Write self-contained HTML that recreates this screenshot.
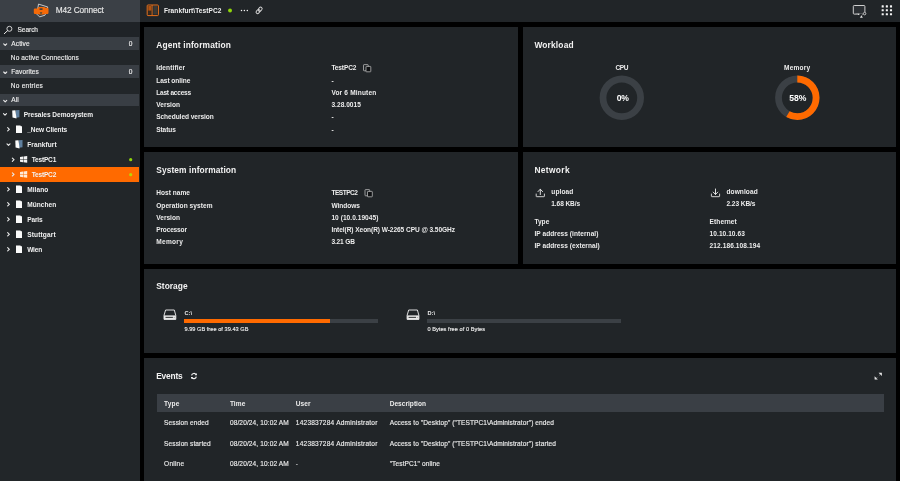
<!DOCTYPE html>
<html lang="en">
<head>
<meta charset="utf-8">
<title>M42 Connect</title>
<style>
html,body{margin:0;padding:0;background:#000;}
body{width:900px;height:481px;overflow:hidden;position:relative;font-family:"Liberation Sans",sans-serif;}
.abs,.t{position:absolute;}
.t{white-space:pre;line-height:1;display:block;}
svg{position:absolute;overflow:visible;}
#sidebar{left:0;top:0;width:139.8px;height:481px;background:#222629;}
#brand{left:0;top:0;width:139.8px;height:22.4px;background:#3b4046;}
#searchrow{left:0;top:22.4px;width:139.8px;height:14.6px;background:#1f2327;}
.sec{left:0;width:139.3px;background:#393e44;}
#sel{left:0;top:166.5px;width:139.3px;height:15.2px;background:#ff6a00;}
#topbar{left:140px;top:0;width:760px;height:22.1px;background:#212528;}
.panel{background:#212528;}
</style>
</head>
<body>
<div id="sidebar" class="abs"></div>
<div id="brand" class="abs"></div>
<div id="searchrow" class="abs"></div>
<div class="abs sec" style="top:37px;height:12.7px"></div>
<div class="abs sec" style="top:65.4px;height:12.5px"></div>
<div class="abs sec" style="top:93.7px;height:12.4px"></div>
<div id="sel" class="abs"></div>
<div id="topbar" class="abs"></div>

<div class="abs panel" style="left:144.2px;top:27px;width:373.8px;height:119.8px"></div>
<div class="abs panel" style="left:523px;top:27px;width:373px;height:119.8px"></div>
<div class="abs panel" style="left:144.2px;top:152px;width:373.8px;height:111.7px"></div>
<div class="abs panel" style="left:523px;top:152px;width:373px;height:111.7px"></div>
<div class="abs panel" style="left:144.2px;top:268.5px;width:751.8px;height:84.5px"></div>
<div class="abs panel" style="left:144.2px;top:358px;width:751.8px;height:130px"></div>

<!-- events table header -->
<div class="abs" style="left:157px;top:394.2px;width:727px;height:18px;background:#3a3f45"></div>

<!-- storage bars -->
<div class="abs" style="left:184.4px;top:318.9px;width:193.4px;height:3.9px;background:#3b4045"></div>
<div class="abs" style="left:184.4px;top:318.9px;width:145.4px;height:3.9px;background:#ff6a00"></div>
<div class="abs" style="left:427.3px;top:318.9px;width:193.3px;height:3.9px;background:#3b4045"></div>

<svg width="900" height="481" viewBox="0 0 900 481" style="left:0;top:0">
<!-- donuts -->
<circle cx="621.8" cy="97.8" r="18.8" fill="none" stroke="#3b4045" stroke-width="6.8"/>
<circle cx="797.3" cy="97.8" r="18.8" fill="none" stroke="#3b4045" stroke-width="6.8"/>
<circle cx="797.3" cy="97.8" r="18.8" fill="none" stroke="#ff6a00" stroke-width="6.8" stroke-dasharray="68.51 118.12" transform="rotate(-90 797.3 97.8)"/>
<!-- status dots -->
<circle cx="230.05" cy="10.5" r="1.95" fill="#8fd60a"/>
<circle cx="130.7" cy="159.7" r="1.6" fill="#8fd60a"/>
<circle cx="130.7" cy="174.7" r="1.6" fill="#b9d600"/>
<g id="logo"><path d="M38.5 4.1 L47.8 7.0 L45.0 15.2 L39.6 16.9 L36.9 14.2 Z" fill="none" stroke="#e9e9e9" stroke-width="0.8" stroke-linejoin="round"/><path d="M33.8 9.6 Q33.8 8.4 35 8.4 L37.6 8.4 L38.4 7.1 L44.4 7.1 L45.1 7.7 L47.3 7.7 Q48.5 7.7 48.5 8.9 L48.5 12.7 Q48.5 13.9 47.3 13.9 L44.6 13.9 L43.6 14.5 L38.9 14.5 L37.9 13.9 L35 13.9 Q33.8 13.9 33.8 12.7 Z" fill="#f56a08"/><rect x="39.5" y="8.2" width="3.1" height="1.7" rx="0.3" fill="#4a4038"/><path d="M39.6 12.2 L42.4 12.2 L41 14.4 Z" fill="#4b4a32"/></g>
<circle cx="9.4" cy="28.8" r="2.5" fill="none" stroke="#e8e8e8" stroke-width="0.85"/><path d="M7.5 30.7 L4.3 33.7" stroke="#e8e8e8" stroke-width="1" stroke-linecap="round"/>
<path d="M3.70 43.80 L5.20 45.30 L6.70 43.80" fill="none" stroke="#e8e8e8" stroke-width="1.15" stroke-linecap="round" stroke-linejoin="round"/>
<path d="M3.70 72.00 L5.20 73.50 L6.70 72.00" fill="none" stroke="#e8e8e8" stroke-width="1.15" stroke-linecap="round" stroke-linejoin="round"/>
<path d="M3.70 100.40 L5.20 101.90 L6.70 100.40" fill="none" stroke="#e8e8e8" stroke-width="1.15" stroke-linecap="round" stroke-linejoin="round"/>
<path d="M3.50 113.70 L5.00 115.20 L6.50 113.70" fill="none" stroke="#e8e8e8" stroke-width="1.15" stroke-linecap="round" stroke-linejoin="round"/>
<path d="M7.65 127.70 L9.35 129.30 L7.65 130.90" fill="none" stroke="#e8e8e8" stroke-width="1.15" stroke-linecap="round" stroke-linejoin="round"/>
<path d="M7.00 143.80 L8.50 145.30 L10.00 143.80" fill="none" stroke="#e8e8e8" stroke-width="1.15" stroke-linecap="round" stroke-linejoin="round"/>
<path d="M12.35 158.10 L14.05 159.70 L12.35 161.30" fill="none" stroke="#e8e8e8" stroke-width="1.15" stroke-linecap="round" stroke-linejoin="round"/>
<path d="M12.35 172.80 L14.05 174.40 L12.35 176.00" fill="none" stroke="#e8e8e8" stroke-width="1.15" stroke-linecap="round" stroke-linejoin="round"/>
<path d="M7.65 187.70 L9.35 189.30 L7.65 190.90" fill="none" stroke="#e8e8e8" stroke-width="1.15" stroke-linecap="round" stroke-linejoin="round"/>
<path d="M7.65 202.70 L9.35 204.30 L7.65 205.90" fill="none" stroke="#e8e8e8" stroke-width="1.15" stroke-linecap="round" stroke-linejoin="round"/>
<path d="M7.65 217.70 L9.35 219.30 L7.65 220.90" fill="none" stroke="#e8e8e8" stroke-width="1.15" stroke-linecap="round" stroke-linejoin="round"/>
<path d="M7.65 232.70 L9.35 234.30 L7.65 235.90" fill="none" stroke="#e8e8e8" stroke-width="1.15" stroke-linecap="round" stroke-linejoin="round"/>
<path d="M7.65 247.70 L9.35 249.30 L7.65 250.90" fill="none" stroke="#e8e8e8" stroke-width="1.15" stroke-linecap="round" stroke-linejoin="round"/>
<path d="M15.80 110.30 L19.40 110.10 L19.40 117.30 L15.80 117.70 Z" fill="#5f7f9e"/><path d="M12.20 110.50 L15.40 110.20 L16.50 118.40 L12.50 117.50 Z" fill="#fbfbfb"/>
<path d="M16.00 125.40 L20.40 125.40 L20.90 126.30 L22.00 126.30 L22.00 132.90 L16.00 132.90 Z" fill="#fbfbfb"/>
<path d="M18.90 140.30 L22.50 140.10 L22.50 147.30 L18.90 147.70 Z" fill="#5f7f9e"/><path d="M15.30 140.50 L18.50 140.20 L19.60 148.40 L15.60 147.50 Z" fill="#fbfbfb"/>
<path d="M20.00 157.00 L23.00 156.55 L23.00 159.10 L20.00 159.10 Z M23.50 156.50 L27.20 156.00 L27.20 159.10 L23.50 159.10 Z M20.00 159.60 L23.00 159.60 L23.00 162.15 L20.00 161.70 Z M23.50 159.60 L27.20 159.60 L27.20 162.70 L23.50 162.20 Z" fill="#f4f4f4"/>
<path d="M20.00 172.00 L23.00 171.55 L23.00 174.10 L20.00 174.10 Z M23.50 171.50 L27.20 171.00 L27.20 174.10 L23.50 174.10 Z M20.00 174.60 L23.00 174.60 L23.00 177.15 L20.00 176.70 Z M23.50 174.60 L27.20 174.60 L27.20 177.70 L23.50 177.20 Z" fill="#ffe9d6"/>
<path d="M16.00 185.40 L20.40 185.40 L20.90 186.30 L22.00 186.30 L22.00 192.90 L16.00 192.90 Z" fill="#fbfbfb"/>
<path d="M16.00 200.40 L20.40 200.40 L20.90 201.30 L22.00 201.30 L22.00 207.90 L16.00 207.90 Z" fill="#fbfbfb"/>
<path d="M16.00 215.40 L20.40 215.40 L20.90 216.30 L22.00 216.30 L22.00 222.90 L16.00 222.90 Z" fill="#fbfbfb"/>
<path d="M16.00 230.40 L20.40 230.40 L20.90 231.30 L22.00 231.30 L22.00 237.90 L16.00 237.90 Z" fill="#fbfbfb"/>
<path d="M16.00 245.40 L20.40 245.40 L20.90 246.30 L22.00 246.30 L22.00 252.90 L16.00 252.90 Z" fill="#fbfbfb"/>
<rect x="147.2" y="5" width="11.2" height="10.6" rx="0.8" fill="none" stroke="#e8701a" stroke-width="1"/><rect x="148.3" y="6" width="3" height="8.4" fill="#3a2a1c"/><rect x="148.3" y="6" width="3" height="4.6" fill="#b4520f"/><path d="M152.1 5 L152.1 15.5" stroke="#e8701a" stroke-width="0.9"/><rect x="153.4" y="6" width="3.8" height="8.4" fill="#3c3935"/>
<circle cx="241.5" cy="10.5" r="0.75" fill="#f2f2f2"/>
<circle cx="244.4" cy="10.5" r="0.75" fill="#f2f2f2"/>
<circle cx="247.3" cy="10.5" r="0.75" fill="#f2f2f2"/>
<g transform="rotate(-48 259.1 10.4)" fill="none" stroke="#d4d4d4" stroke-width="0.95"><rect x="255.3" y="8.9" width="4.5" height="3.0" rx="1.5"/><rect x="258.4" y="8.9" width="4.5" height="3.0" rx="1.5"/></g>
<rect x="853.3" y="5.5" width="11.6" height="8.6" rx="0.9" fill="#2b2f33" stroke="#cfcfcf" stroke-width="1"/><rect x="856.5" y="13.6" width="9" height="5" fill="#212528"/><path d="M856.3 14.1 L859.5 14.1" stroke="#cfcfcf" stroke-width="1"/><circle cx="858.6" cy="14.3" r="0.6" fill="#e6e6e6"/><path d="M859.9 17.8 L861.4 15.3 L862.9 17.8 Z" fill="#e0e0e0"/><rect x="863.2" y="12.2" width="2.4" height="2.4" fill="#212528"/><circle cx="864.6" cy="13.6" r="1.25" fill="none" stroke="#e0e0e0" stroke-width="0.8"/><path d="M861.8 15.2 L863.6 13.9" stroke="#bdbdbd" stroke-width="0.6"/>
<rect x="881.65" y="5.35" width="2.1" height="2.1" rx="0.3" fill="#f4f4f4"/>
<rect x="881.65" y="9.25" width="2.1" height="2.1" rx="0.3" fill="#f4f4f4"/>
<rect x="881.65" y="13.15" width="2.1" height="2.1" rx="0.3" fill="#f4f4f4"/>
<rect x="885.80" y="5.35" width="2.1" height="2.1" rx="0.3" fill="#f4f4f4"/>
<rect x="885.80" y="9.25" width="2.1" height="2.1" rx="0.3" fill="#f4f4f4"/>
<rect x="885.80" y="13.15" width="2.1" height="2.1" rx="0.3" fill="#f4f4f4"/>
<rect x="889.95" y="5.35" width="2.1" height="2.1" rx="0.3" fill="#f4f4f4"/>
<rect x="889.95" y="9.25" width="2.1" height="2.1" rx="0.3" fill="#f4f4f4"/>
<rect x="889.95" y="13.15" width="2.1" height="2.1" rx="0.3" fill="#f4f4f4"/>
<rect x="363.50" y="64.60" width="4.7" height="6.2" rx="0.6" fill="none" stroke="#c0c0c0" stroke-width="0.75"/><rect x="366.00" y="66.40" width="4.8" height="5.4" rx="0.5" fill="#0e1012" stroke="#c0c0c0" stroke-width="0.75"/>
<rect x="365.00" y="189.60" width="4.7" height="6.2" rx="0.6" fill="none" stroke="#c0c0c0" stroke-width="0.75"/><rect x="367.50" y="191.40" width="4.8" height="5.4" rx="0.5" fill="#0e1012" stroke="#c0c0c0" stroke-width="0.75"/>
<path d="M536.20 194.00 L536.20 196.30 Q536.20 196.70 536.70 196.70 L543.90 196.70 Q544.40 196.70 544.40 196.30 L544.40 194.00" fill="none" stroke="#e2e2e2" stroke-width="0.9" stroke-linecap="round"/>
<path d="M540.3 194.6 L540.3 189.3 M538.0 191.6 L540.3 189.2 L542.6 191.6" fill="none" stroke="#e8e8e8" stroke-width="0.95" stroke-linecap="round" stroke-linejoin="round"/>
<path d="M711.40 194.00 L711.40 196.30 Q711.40 196.70 711.90 196.70 L719.10 196.70 Q719.60 196.70 719.60 196.30 L719.60 194.00" fill="none" stroke="#e2e2e2" stroke-width="0.9" stroke-linecap="round"/>
<path d="M715.5 189.0 L715.5 194.4 M713.2 192.1 L715.5 194.5 L717.8 192.1" fill="none" stroke="#e8e8e8" stroke-width="0.95" stroke-linecap="round" stroke-linejoin="round"/>
<path d="M165.60 310.00 L174.30 310.00 L175.80 315.40 L175.80 319.40 L164.00 319.40 L164.00 315.40 Z" fill="none" stroke="#f0f0f0" stroke-width="0.9" stroke-linejoin="round"/><rect x="164.00" y="315.40" width="11.8" height="4.0" fill="#e9e9e9"/><path d="M165.50 317.35 L172.90 317.35" stroke="#15181a" stroke-width="0.9"/><circle cx="174.10" cy="317.35" r="0.45" fill="#444"/>
<path d="M408.70 310.00 L417.40 310.00 L418.90 315.40 L418.90 319.40 L407.10 319.40 L407.10 315.40 Z" fill="none" stroke="#f0f0f0" stroke-width="0.9" stroke-linejoin="round"/><rect x="407.10" y="315.40" width="11.8" height="4.0" fill="#e9e9e9"/><path d="M408.60 317.35 L416.00 317.35" stroke="#15181a" stroke-width="0.9"/><circle cx="417.20" cy="317.35" r="0.45" fill="#444"/>
<path d="M191.55 375.4 A2.45 2.45 0 0 1 196.1 374.7" fill="none" stroke="#f2f2f2" stroke-width="1.15"/><path d="M196.35 376.7 A2.45 2.45 0 0 1 191.8 377.4" fill="none" stroke="#f2f2f2" stroke-width="1.15"/><path d="M196.9 373.0 L196.9 375.2 L194.8 375.2 Z" fill="#f2f2f2"/><path d="M191.0 379.1 L191.0 376.9 L193.1 376.9 Z" fill="#f2f2f2"/>
<path d="M878.6 372.8 L881.8 372.8 L881.8 376.0 Z" fill="#f4f4f4"/><path d="M874.6 376.2 L874.6 379.4 L877.8 379.4 Z" fill="#f4f4f4"/><path d="M880.6 374 L878.9 375.7 M877.5 377.1 L875.8 378.8" stroke="#9a9a9a" stroke-width="0.6"/>
</svg>
<div id="labels" class="abs" style="left:0;top:0;width:900px;height:481px;will-change:transform">
<span class="t" id="t0" style="left:55.80px;top:6.00px;font-size:8.3px;font-weight:400;color:#e6e6e6;letter-spacing:-0.146px;-webkit-text-stroke:0.14px #e6e6e6">M42 Connect</span>
<span class="t" id="t1" style="left:17.50px;top:27.00px;font-size:6.56px;font-weight:400;color:#ececec;letter-spacing:-0.050px;-webkit-text-stroke:0.14px #ececec">Search</span>
<span class="t" id="t2" style="left:11.30px;top:41.00px;font-size:6.56px;font-weight:400;color:#ececec;letter-spacing:0.094px;-webkit-text-stroke:0.14px #ececec">Active</span>
<span class="t" id="t3" style="left:128.80px;top:41.00px;font-size:6.56px;font-weight:400;color:#ececec;letter-spacing:0.000px;-webkit-text-stroke:0.14px #ececec">0</span>
<span class="t" id="t4" style="left:10.80px;top:55.00px;font-size:6.56px;font-weight:400;color:#ececec;letter-spacing:0.124px;-webkit-text-stroke:0.14px #ececec">No active Connections</span>
<span class="t" id="t5" style="left:11.30px;top:69.00px;font-size:6.56px;font-weight:400;color:#ececec;letter-spacing:0.070px;-webkit-text-stroke:0.14px #ececec">Favorites</span>
<span class="t" id="t6" style="left:128.80px;top:69.00px;font-size:6.56px;font-weight:400;color:#ececec;letter-spacing:0.000px;-webkit-text-stroke:0.14px #ececec">0</span>
<span class="t" id="t7" style="left:10.80px;top:83.00px;font-size:6.56px;font-weight:400;color:#ececec;letter-spacing:0.240px;-webkit-text-stroke:0.14px #ececec">No entries</span>
<span class="t" id="t8" style="left:11.30px;top:97.00px;font-size:6.56px;font-weight:400;color:#ececec;letter-spacing:0.109px;-webkit-text-stroke:0.14px #ececec">All</span>
<span class="t" id="t9" style="left:23.70px;top:112.00px;font-size:6.56px;font-weight:700;color:#f2f2f2;letter-spacing:-0.012px">Presales Demosystem</span>
<span class="t" id="t10" style="left:27.20px;top:127.00px;font-size:6.56px;font-weight:700;color:#f2f2f2;letter-spacing:-0.068px">_New Clients</span>
<span class="t" id="t11" style="left:27.20px;top:142.00px;font-size:6.56px;font-weight:700;color:#f2f2f2;letter-spacing:0.094px">Frankfurt</span>
<span class="t" id="t12" style="left:31.70px;top:157.00px;font-size:6.56px;font-weight:700;color:#f2f2f2;letter-spacing:-0.186px">TestPC1</span>
<span class="t" id="t13" style="left:31.70px;top:172.00px;font-size:6.56px;font-weight:700;color:#f2f2f2;letter-spacing:-0.186px">TestPC2</span>
<span class="t" id="t14" style="left:27.20px;top:187.00px;font-size:6.56px;font-weight:700;color:#f2f2f2;letter-spacing:0.073px">Milano</span>
<span class="t" id="t15" style="left:27.20px;top:202.00px;font-size:6.56px;font-weight:700;color:#f2f2f2;letter-spacing:0.061px">München</span>
<span class="t" id="t16" style="left:27.20px;top:217.00px;font-size:6.56px;font-weight:700;color:#f2f2f2;letter-spacing:-0.129px">Paris</span>
<span class="t" id="t17" style="left:27.20px;top:232.00px;font-size:6.56px;font-weight:700;color:#f2f2f2;letter-spacing:0.152px">Stuttgart</span>
<span class="t" id="t18" style="left:27.20px;top:247.00px;font-size:6.56px;font-weight:700;color:#f2f2f2;letter-spacing:-0.198px">Wien</span>
<span class="t" id="t19" style="left:163.90px;top:8.00px;font-size:6.56px;font-weight:700;color:#f0f0f0;letter-spacing:0.083px">Frankfurt\TestPC2</span>
<span class="t" id="t20" style="left:156.20px;top:41.00px;font-size:8.4px;font-weight:700;color:#f2f2f2;letter-spacing:0.155px">Agent information</span>
<span class="t" id="t21" style="left:156.20px;top:65.00px;font-size:6.56px;font-weight:700;color:#ececec;letter-spacing:0.127px">Identifier</span>
<span class="t" id="t22" style="left:331.40px;top:65.00px;font-size:6.56px;font-weight:700;color:#ececec;letter-spacing:-0.120px">TestPC2</span>
<span class="t" id="t23" style="left:156.20px;top:78.00px;font-size:6.56px;font-weight:700;color:#ececec;letter-spacing:-0.026px">Last online</span>
<span class="t" id="t24" style="left:331.40px;top:78.00px;font-size:6.56px;font-weight:700;color:#ececec;letter-spacing:0.000px">-</span>
<span class="t" id="t25" style="left:156.20px;top:90.00px;font-size:6.56px;font-weight:700;color:#ececec;letter-spacing:-0.214px">Last access</span>
<span class="t" id="t26" style="left:331.40px;top:90.00px;font-size:6.56px;font-weight:700;color:#ececec;letter-spacing:0.175px">Vor 6 Minuten</span>
<span class="t" id="t27" style="left:156.20px;top:102.00px;font-size:6.56px;font-weight:700;color:#ececec;letter-spacing:0.024px">Version</span>
<span class="t" id="t28" style="left:331.40px;top:102.00px;font-size:6.56px;font-weight:700;color:#ececec;letter-spacing:0.045px">3.28.0015</span>
<span class="t" id="t29" style="left:156.20px;top:114.00px;font-size:6.56px;font-weight:700;color:#ececec;letter-spacing:-0.039px">Scheduled version</span>
<span class="t" id="t30" style="left:331.40px;top:114.00px;font-size:6.56px;font-weight:700;color:#ececec;letter-spacing:0.000px">-</span>
<span class="t" id="t31" style="left:156.20px;top:127.00px;font-size:6.56px;font-weight:700;color:#ececec;letter-spacing:-0.083px">Status</span>
<span class="t" id="t32" style="left:331.40px;top:127.00px;font-size:6.56px;font-weight:700;color:#ececec;letter-spacing:0.000px">-</span>
<span class="t" id="t33" style="left:156.20px;top:166.00px;font-size:8.4px;font-weight:700;color:#f2f2f2;letter-spacing:0.107px">System information</span>
<span class="t" id="t34" style="left:156.20px;top:190.00px;font-size:6.56px;font-weight:700;color:#ececec;letter-spacing:0.039px">Host name</span>
<span class="t" id="t35" style="left:331.40px;top:190.00px;font-size:6.56px;font-weight:700;color:#ececec;letter-spacing:-0.478px">TESTPC2</span>
<span class="t" id="t36" style="left:156.20px;top:203.00px;font-size:6.56px;font-weight:700;color:#ececec;letter-spacing:0.066px">Operation system</span>
<span class="t" id="t37" style="left:331.40px;top:203.00px;font-size:6.56px;font-weight:700;color:#ececec;letter-spacing:-0.012px">Windows</span>
<span class="t" id="t38" style="left:156.20px;top:215.00px;font-size:6.56px;font-weight:700;color:#ececec;letter-spacing:0.024px">Version</span>
<span class="t" id="t39" style="left:331.40px;top:215.00px;font-size:6.56px;font-weight:700;color:#ececec;letter-spacing:0.055px">10 (10.0.19045)</span>
<span class="t" id="t40" style="left:156.20px;top:227.00px;font-size:6.56px;font-weight:700;color:#ececec;letter-spacing:-0.154px">Processor</span>
<span class="t" id="t41" style="left:331.40px;top:227.00px;font-size:6.56px;font-weight:700;color:#ececec;letter-spacing:-0.055px">Intel(R) Xeon(R) W-2265 CPU @ 3.50GHz</span>
<span class="t" id="t42" style="left:156.20px;top:239.00px;font-size:6.56px;font-weight:700;color:#ececec;letter-spacing:0.298px">Memory</span>
<span class="t" id="t43" style="left:331.40px;top:239.00px;font-size:6.56px;font-weight:700;color:#ececec;letter-spacing:-0.132px">3.21 GB</span>
<span class="t" id="t44" style="left:534.40px;top:41.00px;font-size:8.4px;font-weight:700;color:#f2f2f2;letter-spacing:0.169px">Workload</span>
<span class="t" id="t45" style="left:615.60px;top:65.00px;font-size:6.56px;font-weight:700;color:#ececec;letter-spacing:-0.514px">CPU</span>
<span class="t" id="t46" style="left:784.00px;top:65.00px;font-size:6.56px;font-weight:700;color:#ececec;letter-spacing:0.218px">Memory</span>
<span class="t" id="t47" style="left:616.80px;top:94.00px;font-size:8.6px;font-weight:700;color:#ffffff;letter-spacing:-0.222px">0%</span>
<span class="t" id="t48" style="left:789.30px;top:94.00px;font-size:8.6px;font-weight:700;color:#ffffff;letter-spacing:-0.052px">58%</span>
<span class="t" id="t49" style="left:534.40px;top:166.00px;font-size:8.4px;font-weight:700;color:#f2f2f2;letter-spacing:0.359px">Network</span>
<span class="t" id="t50" style="left:551.30px;top:189.00px;font-size:6.56px;font-weight:700;color:#ececec;letter-spacing:0.106px">upload</span>
<span class="t" id="t51" style="left:551.30px;top:201.00px;font-size:6.56px;font-weight:700;color:#ececec;letter-spacing:-0.086px">1.68 KB/s</span>
<span class="t" id="t52" style="left:726.50px;top:189.00px;font-size:6.56px;font-weight:700;color:#ececec;letter-spacing:0.091px">download</span>
<span class="t" id="t53" style="left:726.50px;top:201.00px;font-size:6.56px;font-weight:700;color:#ececec;letter-spacing:-0.061px">2.23 KB/s</span>
<span class="t" id="t54" style="left:534.40px;top:219.00px;font-size:6.56px;font-weight:700;color:#ececec;letter-spacing:0.034px">Type</span>
<span class="t" id="t55" style="left:534.40px;top:231.00px;font-size:6.56px;font-weight:700;color:#ececec;letter-spacing:0.059px">IP address (internal)</span>
<span class="t" id="t56" style="left:534.40px;top:243.00px;font-size:6.56px;font-weight:700;color:#ececec;letter-spacing:0.055px">IP address (external)</span>
<span class="t" id="t57" style="left:709.60px;top:219.00px;font-size:6.56px;font-weight:700;color:#ececec;letter-spacing:0.091px">Ethernet</span>
<span class="t" id="t58" style="left:709.60px;top:231.00px;font-size:6.56px;font-weight:700;color:#ececec;letter-spacing:0.061px">10.10.10.63</span>
<span class="t" id="t59" style="left:709.60px;top:243.00px;font-size:6.56px;font-weight:700;color:#ececec;letter-spacing:0.096px">212.186.108.194</span>
<span class="t" id="t60" style="left:156.20px;top:282.00px;font-size:8.4px;font-weight:700;color:#f2f2f2;letter-spacing:0.035px">Storage</span>
<span class="t" id="t61" style="left:184.40px;top:311.00px;font-size:5.6px;font-weight:700;color:#ececec;letter-spacing:0.066px">C:\</span>
<span class="t" id="t62" style="left:184.40px;top:327.00px;font-size:5.6px;font-weight:400;color:#ececec;letter-spacing:0.038px;-webkit-text-stroke:0.14px #ececec">9.99 GB free of 39.43 GB</span>
<span class="t" id="t63" style="left:427.40px;top:311.00px;font-size:5.6px;font-weight:700;color:#ececec;letter-spacing:0.066px">D:\</span>
<span class="t" id="t64" style="left:427.40px;top:327.00px;font-size:5.6px;font-weight:400;color:#ececec;letter-spacing:0.060px;-webkit-text-stroke:0.14px #ececec">0 Bytes free of 0 Bytes</span>
<span class="t" id="t65" style="left:156.20px;top:372.00px;font-size:8.4px;font-weight:700;color:#f2f2f2;letter-spacing:-0.194px">Events</span>
<span class="t" id="t66" style="left:164.10px;top:401.00px;font-size:6.56px;font-weight:700;color:#ececec;letter-spacing:0.134px">Type</span>
<span class="t" id="t67" style="left:229.90px;top:401.00px;font-size:6.56px;font-weight:700;color:#ececec;letter-spacing:0.076px">Time</span>
<span class="t" id="t68" style="left:295.80px;top:401.00px;font-size:6.56px;font-weight:700;color:#ececec;letter-spacing:0.079px">User</span>
<span class="t" id="t69" style="left:389.70px;top:401.00px;font-size:6.56px;font-weight:700;color:#ececec;letter-spacing:0.028px">Description</span>
<span class="t" id="t70" style="left:164.10px;top:420.00px;font-size:6.56px;font-weight:400;color:#ececec;letter-spacing:0.098px;-webkit-text-stroke:0.14px #ececec">Session ended</span>
<span class="t" id="t71" style="left:229.90px;top:420.00px;font-size:6.56px;font-weight:400;color:#ececec;letter-spacing:0.124px;-webkit-text-stroke:0.14px #ececec">08/20/24, 10:02 AM</span>
<span class="t" id="t72" style="left:295.80px;top:420.00px;font-size:6.56px;font-weight:400;color:#ececec;letter-spacing:0.224px;-webkit-text-stroke:0.14px #ececec">1423837284 Administrator</span>
<span class="t" id="t73" style="left:389.70px;top:420.00px;font-size:6.56px;font-weight:400;color:#ececec;letter-spacing:0.094px;-webkit-text-stroke:0.14px #ececec">Access to &quot;Desktop&quot; (&quot;TESTPC1\Administrator&quot;) ended</span>
<span class="t" id="t74" style="left:164.10px;top:441.00px;font-size:6.56px;font-weight:400;color:#ececec;letter-spacing:0.105px;-webkit-text-stroke:0.14px #ececec">Session started</span>
<span class="t" id="t75" style="left:229.90px;top:441.00px;font-size:6.56px;font-weight:400;color:#ececec;letter-spacing:0.124px;-webkit-text-stroke:0.14px #ececec">08/20/24, 10:02 AM</span>
<span class="t" id="t76" style="left:295.80px;top:441.00px;font-size:6.56px;font-weight:400;color:#ececec;letter-spacing:0.224px;-webkit-text-stroke:0.14px #ececec">1423837284 Administrator</span>
<span class="t" id="t77" style="left:389.70px;top:441.00px;font-size:6.56px;font-weight:400;color:#ececec;letter-spacing:0.094px;-webkit-text-stroke:0.14px #ececec">Access to &quot;Desktop&quot; (&quot;TESTPC1\Administrator&quot;) started</span>
<span class="t" id="t78" style="left:164.10px;top:461.00px;font-size:6.56px;font-weight:400;color:#ececec;letter-spacing:0.212px;-webkit-text-stroke:0.14px #ececec">Online</span>
<span class="t" id="t79" style="left:229.90px;top:461.00px;font-size:6.56px;font-weight:400;color:#ececec;letter-spacing:0.124px;-webkit-text-stroke:0.14px #ececec">08/20/24, 10:02 AM</span>
<span class="t" id="t80" style="left:295.80px;top:461.00px;font-size:6.56px;font-weight:400;color:#ececec;letter-spacing:0.000px;-webkit-text-stroke:0.14px #ececec">-</span>
<span class="t" id="t81" style="left:389.70px;top:461.00px;font-size:6.56px;font-weight:400;color:#ececec;letter-spacing:0.107px;-webkit-text-stroke:0.14px #ececec">&quot;TestPC1&quot; online</span>
</div>
</body>
</html>
